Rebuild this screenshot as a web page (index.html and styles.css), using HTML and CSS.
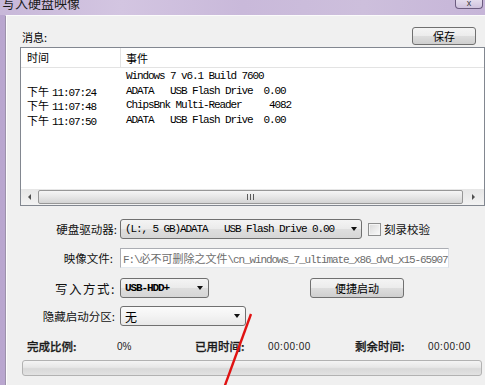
FILE: index.html
```html
<!DOCTYPE html>
<html lang="zh-CN">
<head>
    <meta charset="UTF-8">
    <meta name="viewport" content="width=device-width, initial-scale=1.0">
    <title>写入硬盘映像</title>
    <link rel="stylesheet" href="styles.css">
</head>
<body>
    <div class="window">
        <div class="titlebar">
            <span class="title">写入硬盘映像</span>
            <span class="close-btn">x</span>
        </div>
        <div class="frame">
            <div class="client">
                <div class="top-row">
                    <span class="msg-label">消息:</span>
                    <button class="btn save-btn">保存</button>
                </div>

                <div class="listbox">
                    <div class="list-head">
                        <div class="col-time">时间</div>
                        <div class="col-event">事件</div>
                    </div>
                    <div class="list-body">
                        <div class="row">
                            <div class="col-time"></div>
                            <div class="col-event mono">Windows 7 v6.1 Build 7600</div>
                        </div>
                        <div class="row">
                            <div class="col-time mono"><span class="cjk">下午</span>11:07:24</div>
                            <div class="col-event mono">ADATA   USB Flash Drive  0.00</div>
                        </div>
                        <div class="row">
                            <div class="col-time mono"><span class="cjk">下午</span>11:07:48</div>
                            <div class="col-event mono">ChipsBnk Multi-Reader     4082</div>
                        </div>
                        <div class="row">
                            <div class="col-time mono"><span class="cjk">下午</span>11:07:50</div>
                            <div class="col-event mono">ADATA   USB Flash Drive  0.00</div>
                        </div>
                    </div>
                    <div class="hscroll">
                        <span class="arrow-cell"><span class="arrow-left"></span></span>
                        <span class="thumb"><span class="grip"></span></span>
                        <span class="arrow-cell wide"><span class="arrow-right"></span></span>
                    </div>
                </div>

                <div class="form">
                    <div class="form-row">
                        <span class="label-cell">硬盘驱动器:</span>
                        <div class="combo combo-drive mono">(L:, 5 GB)ADATA   USB Flash Drive 0.00<span class="caret"></span></div>
                        <span class="checkbox"></span>
                        <span class="check-label">刻录校验</span>
                    </div>
                    <div class="form-row">
                        <span class="label-cell label-image">映像文件:</span>
                        <div class="textbox mono">F:\<span class="cjk">必不可删除之文件</span>\cn_windows_7_ultimate_x86_dvd_x15-65907</div>
                    </div>
                    <div class="form-row row-method">
                        <span class="label-cell label-wide">写入方式:</span>
                        <div class="combo combo-method mono bold">USB-HDD+<span class="caret"></span></div>
                        <button class="btn quick-btn">便捷启动</button>
                    </div>
                    <div class="form-row row-hidden">
                        <span class="label-cell label-hidden">隐藏启动分区:</span>
                        <div class="combo combo-hidden">无<span class="caret"></span></div>
                    </div>
                </div>

                <div class="stats">
                    <span class="stat-label">完成比例:</span>
                    <span class="stat-value pct">0%</span>
                    <span class="stat-label">已用时间:</span>
                    <span class="stat-value">00:00:00</span>
                    <span class="stat-label">剩余时间:</span>
                    <span class="stat-value">00:00:00</span>
                </div>

                <div class="progress"></div>
            </div>
        </div>

        <svg class="annotation" width="485" height="385" viewBox="0 0 485 385">
            <line x1="251" y1="314" x2="224" y2="388" stroke="#e01212" stroke-width="2.4" />
        </svg>
    </div>
</body>
</html>
```

FILE: styles.css
```css
body {
    margin: 0;
    width: 485px;
    height: 385px;
    overflow: hidden;
    background-color: #c3b2d5;
    font-family: "Noto Sans CJK SC", "Liberation Sans", sans-serif;
    font-size: 11px;
    color: #000;
}

.window {
    position: relative;
    width: 485px;
    height: 385px;
}

/* title bar */
.titlebar {
    height: 15px;
    display: flex;
    justify-content: space-between;
    overflow: hidden;
    background: linear-gradient(90deg, #c8b8d9 0%, #d3c5e1 25%, #c9b9da 50%, #cdbfdc 75%, #c6b5d8 100%);
}

.title {
    font-size: 13px;
    line-height: 13px;
    margin: -4px 0 0 2px;
    color: #1a1a1a;
}

.close-btn {
    width: 28px;
    height: 9px;
    margin-right: 2px;
    box-sizing: border-box;
    border: 1px solid #6c5c80;
    border-top: none;
    border-radius: 0 0 4px 4px;
    background: linear-gradient(#e4dced, #cfc2de);
    font-family: "Liberation Sans", sans-serif;
    font-size: 9px;
    line-height: 7px;
    text-align: center;
    color: #3a3a3a;
    overflow: hidden;
}

.frame {
    display: flex;
    height: 370px;
    padding-left: 5px;
    background: linear-gradient(90deg, #b9a6cf 0%, #cdbfdd 60%, #a996c3 100%);
}

.client {
    flex: 1;
    display: flex;
    flex-direction: column;
    background-color: #f0f0f0;
    border-top: 1px solid #fbfbfb;
    border-left: 1px solid #9d92ab;
    box-shadow: inset 1px 0 0 #fdfdfd;
    padding: 11px 0 0 14px;
}

.mono {
    font-family: "Liberation Mono", "Noto Sans CJK SC", monospace;
    font-size: 11px;
    letter-spacing: -1.1px;
    white-space: pre;
}

.mono .cjk {
    font-family: "Noto Sans CJK SC", sans-serif;
    letter-spacing: 0;
}

.bold {
    font-weight: bold;
}

/* buttons */
.btn {
    height: 18px;
    padding: 0;
    box-sizing: border-box;
    border: 1px solid #707070;
    border-radius: 3px;
    background: linear-gradient(#f4f4f4 0%, #ececec 48%, #dddddd 52%, #cfcfcf 100%);
    font-family: "Noto Sans CJK SC", sans-serif;
    font-size: 11px;
    line-height: 16px;
    color: #000;
}

.top-row {
    height: 18px;
    display: flex;
    align-items: center;
    justify-content: space-between;
    padding-right: 9px;
}

.msg-label {
    padding: 2px 0 0 2px;
}

.save-btn {
    width: 64px;
}

/* message list */
.listbox {
    margin-top: 2px;
    width: 465px;
    height: 159px;
    box-sizing: border-box;
    border: 1px solid #828790;
    background-color: #fff;
    display: flex;
    flex-direction: column;
}

.list-head {
    height: 20px;
    box-sizing: border-box;
    display: flex;
    align-items: center;
    border-bottom: 1px solid #e3e3e3;
}

.list-head .col-time {
    border-right: 1px solid #e3e3e3;
    height: 19px;
    line-height: 19px;
}

.col-time {
    width: 100px;
    box-sizing: border-box;
    padding-left: 6px;
}

.col-event {
    padding-left: 5px;
}

.list-body {
    flex: 1;
    padding-top: 1px;
}

.row {
    display: flex;
    height: 14.5px;
    line-height: 14.5px;
}

.row .cjk {
    margin-right: 3px;
}

.hscroll {
    height: 16px;
    display: flex;
    align-items: center;
    background: linear-gradient(#e6e6e6, #f2f2f2);
}

.arrow-cell {
    width: 17px;
    height: 16px;
    display: flex;
    align-items: center;
    justify-content: center;
}

.arrow-cell.wide {
    width: 21px;
}

.arrow-left {
    border-right: 3px solid #505050;
    border-top: 3px solid transparent;
    border-bottom: 3px solid transparent;
}

.arrow-right {
    border-left: 3px solid #505050;
    border-top: 3px solid transparent;
    border-bottom: 3px solid transparent;
}

.thumb {
    flex: 1;
    height: 14px;
    box-sizing: border-box;
    border: 1px solid #979797;
    border-radius: 2px;
    background: linear-gradient(#f5f5f5 0%, #e6e6e6 50%, #d4d4d4 100%);
    display: flex;
    align-items: center;
    justify-content: center;
}

.grip {
    width: 7px;
    height: 6px;
    background: repeating-linear-gradient(90deg, #5a5a5a 0 1px, transparent 1px 3px);
}

/* form */
.form {
    margin-top: 13px;
    display: flex;
    flex-direction: column;
    gap: 9px;
}

.form-row {
    height: 20px;
    display: flex;
    align-items: center;
}

.row-method {
    margin-top: 1px;
}

.row-hidden {
    margin-top: -1px;
}

.label-cell {
    width: 97px;
    padding-right: 3px;
    box-sizing: border-box;
    text-align: right;
    margin-left: 3px;
    font-size: 11.5px;
    color: #111;
}

.label-image {
    padding-right: 7px;
}

.label-wide {
    font-size: 12.5px;
    letter-spacing: 1.5px;
    padding-right: 4px;
}

.label-hidden {
    padding-right: 5px;
}

.combo {
    height: 20px;
    box-sizing: border-box;
    border: 1px solid #707070;
    border-radius: 3px;
    background: linear-gradient(#f4f4f4 0%, #ebebeb 48%, #dedede 52%, #d6d6d6 100%);
    display: flex;
    align-items: center;
    padding-left: 4px;
}

.combo .caret {
    margin-left: auto;
    margin-right: 4px;
    border-top: 4px solid #111;
    border-left: 3.5px solid transparent;
    border-right: 3.5px solid transparent;
}

.combo-drive {
    width: 242px;
}

.combo-method {
    width: 89px;
}

.combo-method .caret {
    margin-right: 5px;
}

.combo-hidden {
    width: 126px;
    font-size: 12px;
    background: linear-gradient(#fbfbfb 0%, #f3f3f3 50%, #e8e8e8 100%);
}

.combo-hidden .caret {
    margin-right: 5px;
}

.checkbox {
    width: 13px;
    height: 13px;
    box-sizing: border-box;
    margin-left: 6px;
    border: 1px solid #8e8f8f;
    background: linear-gradient(135deg, #d8d8d8, #fbfbfb);
    box-shadow: inset 0 0 0 1px #f4f4f4;
}

.check-label {
    margin-left: 3px;
    font-size: 11.5px;
    color: #111;
}

.textbox {
    width: 329px;
    height: 20px;
    box-sizing: border-box;
    border: 1px solid #abadb3;
    border-bottom-color: #e3e9ef;
    border-right-color: #dbdfe6;
    background-color: #fff;
    color: #6d6d6d;
    padding-left: 2px;
    line-height: 18px;
    overflow: hidden;
}

.quick-btn {
    width: 94px;
    height: 20px;
    margin-left: 101px;
    line-height: 18px;
}

/* progress */
.stats {
    margin-top: 12px;
    height: 14px;
    padding-left: 7px;
    display: grid;
    grid-template-columns: 90px 78px 73px 87px 73px 1fr;
    align-items: center;
}

.stat-label {
    font-size: 11.5px;
    font-weight: 500;
    -webkit-text-stroke: 0.25px #1a1a1a;
    color: #1a1a1a;
}

.stat-value {
    font-family: "Liberation Sans", sans-serif;
    font-size: 10px;
    letter-spacing: 0.5px;
    color: #222;
}

.stat-value.pct {
    letter-spacing: 0;
}

.progress {
    margin: 8px 0 0 2px;
    width: 460px;
    height: 16px;
    box-sizing: border-box;
    border: 1px solid #b2b2b2;
    border-radius: 3px;
    background: linear-gradient(#f4f4f4 0%, #e7e7e7 45%, #d9d9d9 55%, #e2e2e2 100%);
}

.annotation {
    position: absolute;
    left: 0;
    top: 0;
    pointer-events: none;
}
```
